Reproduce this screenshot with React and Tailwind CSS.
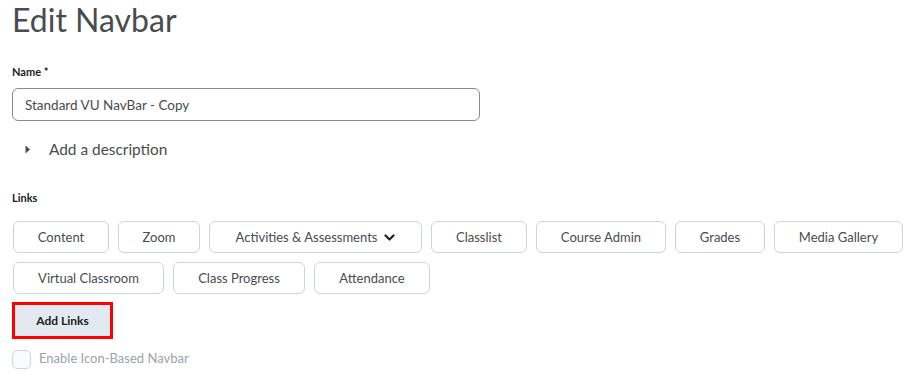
import { useState } from "react";

const links = [
  { label: "Content", w: "w-[96px]" },
  { label: "Zoom", w: "w-[82px]" },
  { label: "Activities & Assessments", w: "w-[213px]", menu: true },
  { label: "Classlist", w: "w-[96px]" },
  { label: "Course Admin", w: "w-[130px]" },
  { label: "Grades", w: "w-[90px]" },
  { label: "Media Gallery", w: "w-[129px]" },
  { label: "Virtual Classroom", w: "w-[151px]" },
  { label: "Class Progress", w: "w-[132px]" },
  { label: "Attendance", w: "w-[116px]" },
];

function LinkButton({ label, w, menu }) {
  return (
    <button
      className={`flex h-[32px] items-center justify-center gap-[7px] rounded-[6px] border border-[#cdd5dc] bg-white text-[13px] text-[#494c4e] ${w}`}
    >
      {label}
      {menu && (
        <svg width="11" height="8" viewBox="0 0 11 8" className="mt-[1px]">
          <path
            d="M1.5 1.5 L5.5 5.5 L9.5 1.5"
            fill="none"
            stroke="#202122"
            strokeWidth="2.2"
            strokeLinecap="round"
            strokeLinejoin="round"
          />
        </svg>
      )}
    </button>
  );
}

export default function App() {
  const [name, setName] = useState("Standard VU NavBar - Copy");

  return (
    <div className="min-h-[380px] bg-white pl-[12px] font-['Lato',sans-serif] text-[#494c4e]">
      <h1 className="pt-[1px] text-[32px] leading-[1.2] font-normal">Edit Navbar</h1>

      <label className="mt-[25px] block text-[11px] leading-[16px] font-bold text-[#202122]">
        Name *
      </label>
      <input
        value={name}
        onChange={(e) => setName(e.target.value)}
        className="mt-[8px] block h-[33px] w-[468px] rounded-[6px] border border-[#868c8f] px-[12px] text-[13.5px] text-[#494c4e] outline-none"
      />

      <div className="mt-[16px] flex h-[24px] items-center">
        <svg width="6" height="9" viewBox="0 0 6 9" className="ml-[13px]">
          <path d="M0.5 0.5 L5 4.5 L0.5 8.5 Z" fill="#494c4e" />
        </svg>
        <span className="ml-[18px] text-[15.4px]">Add a description</span>
      </div>

      <div className="mt-[29px] text-[11px] leading-[16px] font-bold text-[#202122]">Links</div>

      <div className="mt-[15px] flex w-[900px] flex-wrap gap-x-[9px] gap-y-[9px] pl-px">
        {links.map((l) => (
          <LinkButton key={l.label} {...l} />
        ))}
      </div>

      <div className="mt-[8px] inline-block border-[3px] border-[#ff0000]">
        <button className="h-[31px] w-[95px] bg-[#e3e9f1] text-[12px] font-bold text-[#202122]">
          Add Links
        </button>
      </div>

      <label className="mt-[10px] flex items-center">
        <span className="h-[19px] w-[19px] rounded-[5px] border border-[#cdd5dc] bg-[#f9fbff]" />
        <span className="ml-[8px] text-[13px] text-[#9ea2a6]">Enable Icon-Based Navbar</span>
      </label>
    </div>
  );
}
